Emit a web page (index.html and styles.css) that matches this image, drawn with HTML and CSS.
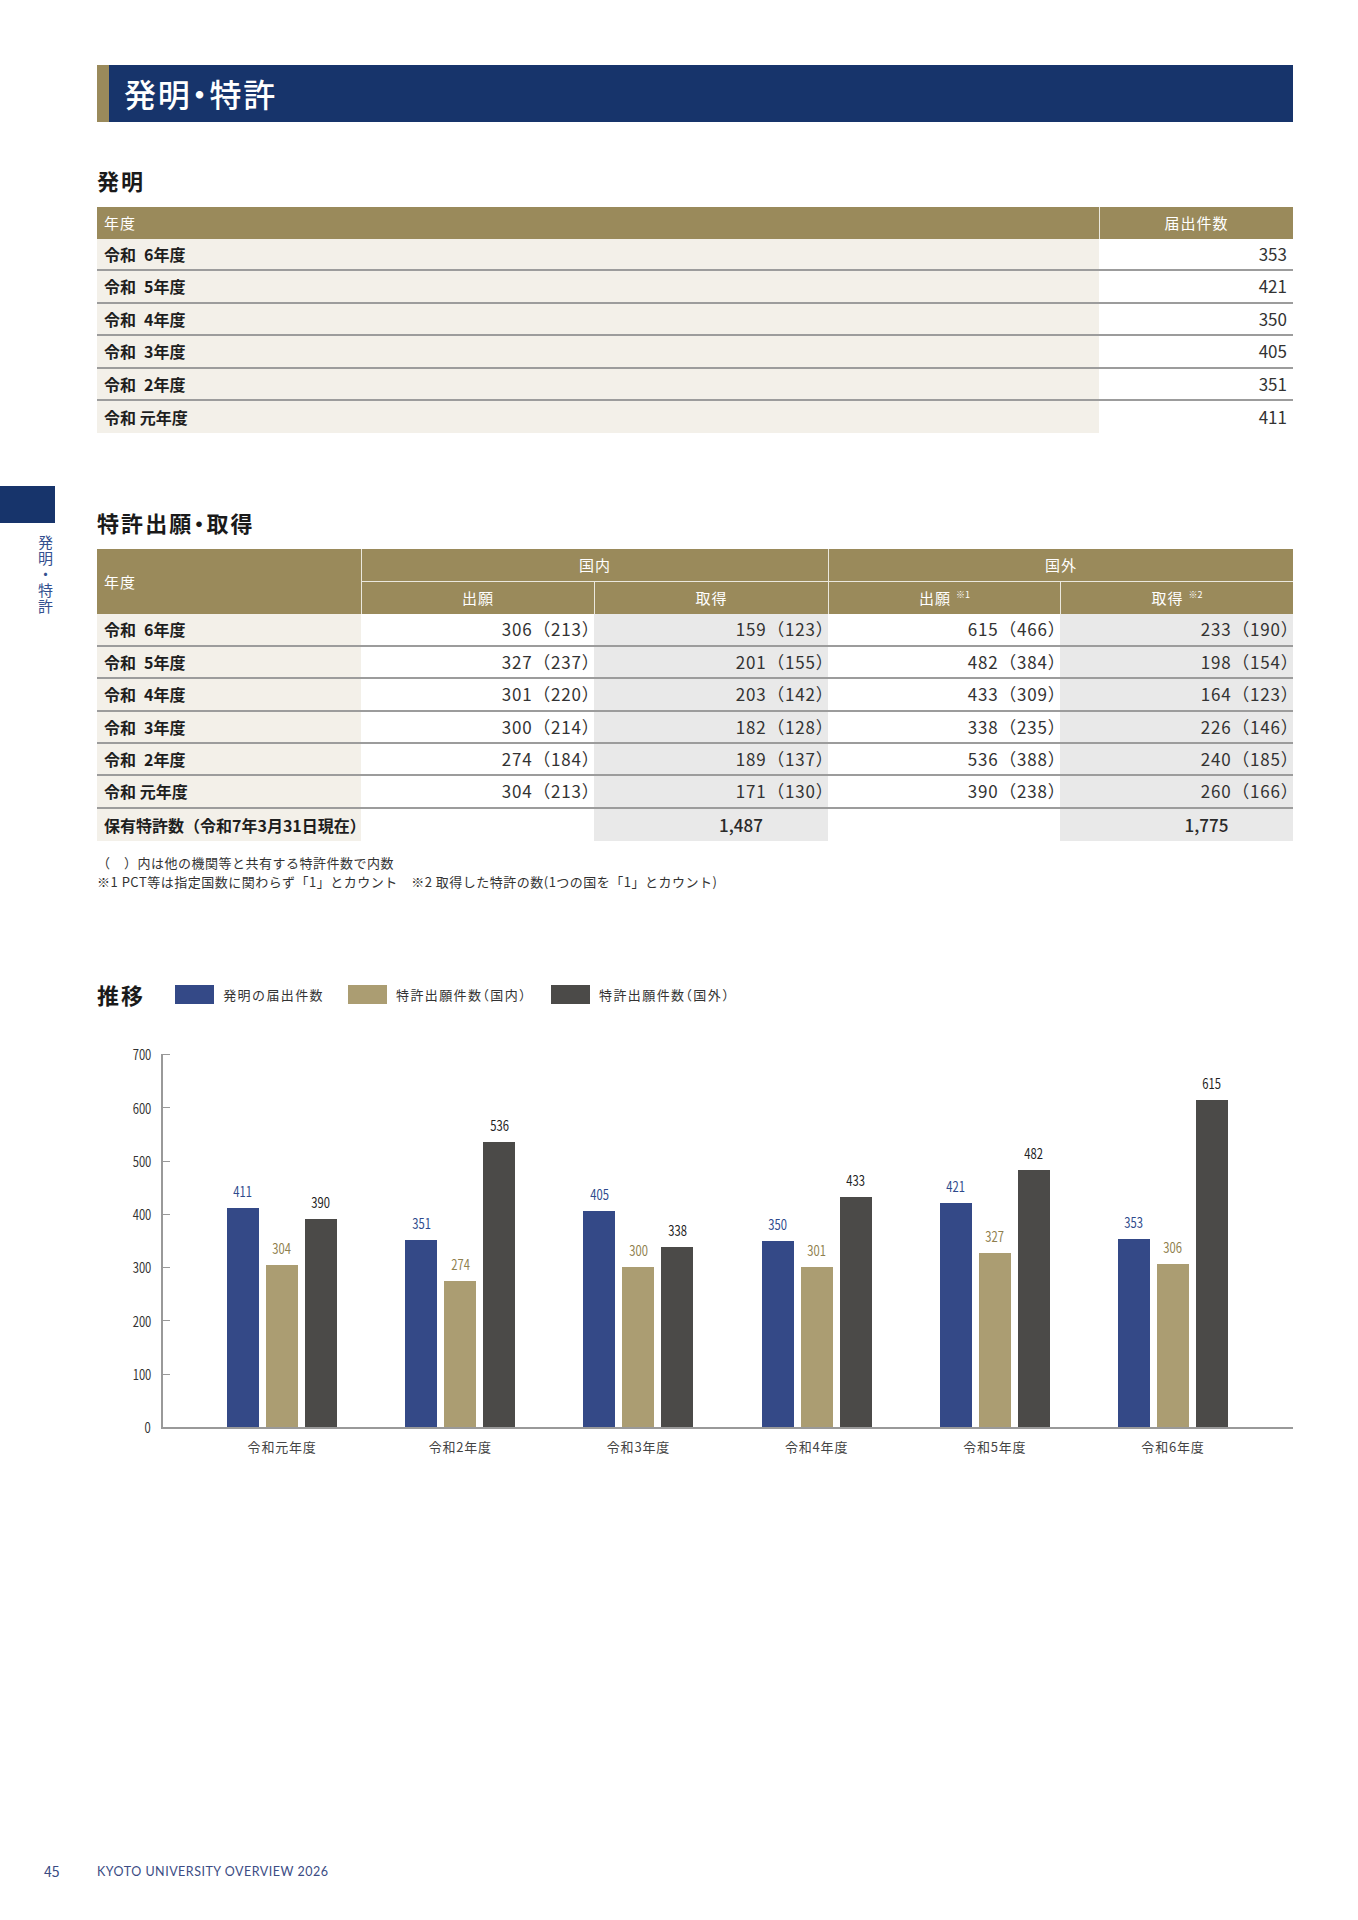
FILE: index.html
```html
<!DOCTYPE html>
<html lang="ja">
<head>
<meta charset="utf-8">
<title>発明・特許</title>
<link rel="stylesheet" href="styles.css">
</head>
<body>
<div class="page">
  <div class="body-row">
    <aside class="side">
      <div class="side-block"></div>
      <div class="side-text">発明・特許</div>
    </aside>
    <main class="main">
      <h1 class="title">発明・特許</h1>

      <h2 class="sub sub-first">発明</h2>
      <table class="tbl t1">
        <colgroup><col class="c1-year"><col class="c1-num"></colgroup>
        <thead>
          <tr><th class="th-left">年度</th><th class="th-sep">届出件数</th></tr>
        </thead>
        <tbody>
          <tr><td class="year">令和&ensp;6年度</td><td class="num">353</td></tr>
          <tr><td class="year">令和&ensp;5年度</td><td class="num">421</td></tr>
          <tr><td class="year">令和&ensp;4年度</td><td class="num">350</td></tr>
          <tr><td class="year">令和&ensp;3年度</td><td class="num">405</td></tr>
          <tr><td class="year">令和&ensp;2年度</td><td class="num">351</td></tr>
          <tr><td class="year">令和 元年度</td><td class="num">411</td></tr>
        </tbody>
      </table>

      <h2 class="sub sub-second">特許出願・取得</h2>
      <table class="tbl t2">
        <colgroup><col class="c2-year"><col class="c2-a"><col class="c2-b"><col class="c2-c"><col class="c2-d"></colgroup>
        <thead>
          <tr><th rowspan="2" class="th-left">年度</th><th colspan="2" class="th-sep">国内</th><th colspan="2" class="th-sep">国外</th></tr>
          <tr><th class="th-sep th-sub">出願</th><th class="th-sep th-sub">取得</th><th class="th-sep th-sub">出願<sup>※1</sup></th><th class="th-sep th-sub">取得<sup>※2</sup></th></tr>
        </thead>
        <tbody>
          <tr><td class="year">令和&ensp;6年度</td><td class="num">306&ensp;（213）</td><td class="num g">159&ensp;（123）</td><td class="num">615&ensp;（466）</td><td class="num g">233&ensp;（190）</td></tr>
          <tr><td class="year">令和&ensp;5年度</td><td class="num">327&ensp;（237）</td><td class="num g">201&ensp;（155）</td><td class="num">482&ensp;（384）</td><td class="num g">198&ensp;（154）</td></tr>
          <tr><td class="year">令和&ensp;4年度</td><td class="num">301&ensp;（220）</td><td class="num g">203&ensp;（142）</td><td class="num">433&ensp;（309）</td><td class="num g">164&ensp;（123）</td></tr>
          <tr><td class="year">令和&ensp;3年度</td><td class="num">300&ensp;（214）</td><td class="num g">182&ensp;（128）</td><td class="num">338&ensp;（235）</td><td class="num g">226&ensp;（146）</td></tr>
          <tr><td class="year">令和&ensp;2年度</td><td class="num">274&ensp;（184）</td><td class="num g">189&ensp;（137）</td><td class="num">536&ensp;（388）</td><td class="num g">240&ensp;（185）</td></tr>
          <tr><td class="year">令和 元年度</td><td class="num">304&ensp;（213）</td><td class="num g">171&ensp;（130）</td><td class="num">390&ensp;（238）</td><td class="num g">260&ensp;（166）</td></tr>
          <tr><td class="year">保有特許数（令和7年3月31日現在）</td><td></td><td class="ctr g">1,487</td><td></td><td class="ctr g">1,775</td></tr>
        </tbody>
      </table>
      <div class="notes">
        <p>（　）内は他の機関等と共有する特許件数で内数</p>
        <p>※1 PCT等は指定国数に関わらず「1」とカウント　※2 取得した特許の数(1つの国を「1」とカウント)</p>
      </div>

      <div class="legend">
        <h2 class="sub legend-title">推移</h2>
        <div class="key"><span class="swatch s-blue"></span>発明の届出件数</div>
        <div class="key"><span class="swatch s-gold"></span>特許出願件数（国内）</div>
        <div class="key"><span class="swatch s-dark"></span>特許出願件数（国外）</div>
      </div>

      <div class="chart">
        <div class="yaxis">
          <span><b>700</b></span><span><b>600</b></span><span><b>500</b></span><span><b>400</b></span><span><b>300</b></span><span><b>200</b></span><span><b>100</b></span><span><b>0</b></span>
        </div>
        <div class="plot">
          <div class="group">
            <div class="barcol"><span class="val v-blue">411</span><div class="bar b-blue" style="height:219.0px"></div></div>
            <div class="barcol"><span class="val v-gold">304</span><div class="bar b-gold" style="height:162.0px"></div></div>
            <div class="barcol"><span class="val v-dark">390</span><div class="bar b-dark" style="height:207.8px"></div></div>
          </div>
          <div class="group">
            <div class="barcol"><span class="val v-blue">351</span><div class="bar b-blue" style="height:187.0px"></div></div>
            <div class="barcol"><span class="val v-gold">274</span><div class="bar b-gold" style="height:146.0px"></div></div>
            <div class="barcol"><span class="val v-dark">536</span><div class="bar b-dark" style="height:285.6px"></div></div>
          </div>
          <div class="group">
            <div class="barcol"><span class="val v-blue">405</span><div class="bar b-blue" style="height:215.8px"></div></div>
            <div class="barcol"><span class="val v-gold">300</span><div class="bar b-gold" style="height:159.9px"></div></div>
            <div class="barcol"><span class="val v-dark">338</span><div class="bar b-dark" style="height:180.1px"></div></div>
          </div>
          <div class="group">
            <div class="barcol"><span class="val v-blue">350</span><div class="bar b-blue" style="height:186.5px"></div></div>
            <div class="barcol"><span class="val v-gold">301</span><div class="bar b-gold" style="height:160.4px"></div></div>
            <div class="barcol"><span class="val v-dark">433</span><div class="bar b-dark" style="height:230.7px"></div></div>
          </div>
          <div class="group">
            <div class="barcol"><span class="val v-blue">421</span><div class="bar b-blue" style="height:224.3px"></div></div>
            <div class="barcol"><span class="val v-gold">327</span><div class="bar b-gold" style="height:174.2px"></div></div>
            <div class="barcol"><span class="val v-dark">482</span><div class="bar b-dark" style="height:256.8px"></div></div>
          </div>
          <div class="group">
            <div class="barcol"><span class="val v-blue">353</span><div class="bar b-blue" style="height:188.1px"></div></div>
            <div class="barcol"><span class="val v-gold">306</span><div class="bar b-gold" style="height:163.1px"></div></div>
            <div class="barcol"><span class="val v-dark">615</span><div class="bar b-dark" style="height:327.7px"></div></div>
          </div>
        </div>
        <div class="xlabels">
          <span>令和元年度</span><span>令和2年度</span><span>令和3年度</span><span>令和4年度</span><span>令和5年度</span><span>令和6年度</span>
        </div>
      </div>
    </main>
  </div>
  <footer class="footer">
    <span class="pageno">45</span>
    <span class="pubname">KYOTO UNIVERSITY OVERVIEW 2026</span>
  </footer>
</div>
</body>
</html>
```

FILE: styles.css
```css
* { box-sizing: border-box; }
html, body { margin: 0; padding: 0; background: #fff; }
body {
  font-family: "Noto Sans CJK JP", "Noto Sans", sans-serif;
  color: #222;
  width: 1358px;
}
.page { min-height: 1920px; display: flex; flex-direction: column; }
.body-row { display: flex; }

/* side tab */
.side { width: 97px; flex: none; padding-top: 486px; }
.side-block { width: 55px; height: 37px; background: #17346b; }
.side-text {
  writing-mode: vertical-rl;
  font-size: 15px;
  line-height: 15px;
  letter-spacing: 1px;
  color: #33508f;
  margin: 12px 0 0 38px;
}

.main { width: 1196px; flex: none; padding-top: 65px; }

.title {
  margin: 0;
  height: 57px;
  line-height: 57px;
  background: #17346b;
  border-left: 12px solid #9a8a5b;
  padding-left: 15px;
  color: #fff;
  font-size: 32px;
  letter-spacing: 1.8px;
  font-weight: 500;
  font-feature-settings: "halt";
}

.sub {
  margin: 0;
  font-size: 22px;
  line-height: 30px;
  font-weight: 700;
  letter-spacing: 2.1px;
  color: #1a1a1a;
  font-feature-settings: "halt";
}
.sub-first { margin: 43px 0 12px; }
.sub-second { margin: 74px 0 12px; }

/* tables */
.tbl { width: 100%; border-collapse: separate; border-spacing: 0; table-layout: fixed; }
.c1-year { width: 1002px; }
.c1-num { width: 194px; }
.c2-year { width: 264px; }
.c2-a { width: 233px; }
.c2-b { width: 234px; }
.c2-c { width: 232px; }
.c2-d { width: 233px; }

.tbl th {
  background: #9a8a5b;
  color: #fff;
  font-weight: 400;
  font-size: 15px;
  letter-spacing: 1px;
  line-height: 32px;
  padding: 0;
  text-align: center;
}
.tbl th.th-left { text-align: left; padding-left: 7px; }
.tbl th.th-sep { border-left: 1px solid rgba(255,255,255,0.8); }
.tbl th.th-sub { border-top: 1px solid rgba(255,255,255,0.8); }
.tbl sup { font-size: 9px; line-height: 0; vertical-align: 6px; margin-left: 5px; letter-spacing: 0; }

.tbl td {
  padding: 0;
  line-height: 30.4px;
  border-bottom: 2px solid #9c9c9c;
  background: #fff;
  white-space: nowrap;
}
.tbl tbody tr:last-child td { border-bottom: 0; line-height: 32.4px; }
.tbl td.year {
  background: #f3f0e9;
  font-weight: 700;
  font-size: 16px;
  padding-left: 7px;
  color: #1e1e1e;
}
.tbl td.num { text-align: right; padding-right: 6px; font-size: 17px; color: #333; }
.t2 td.num { padding-right: 3px; letter-spacing: 0.8px; font-feature-settings: "halt"; }
.tbl td.ctr { text-align: center; padding-left: 60px; font-size: 17px; font-weight: 500; color: #2a2a2a; }
.tbl td.g { background: #e9e9e9; }

.notes { margin-top: 12px; font-size: 13px; line-height: 19px; letter-spacing: 0.5px; color: #333; }
.notes p { margin: 0; }

/* legend */
.legend { display: flex; align-items: center; margin-top: 88px; }
.legend-title { margin-right: 30px; }
.key {
  display: flex;
  align-items: center;
  margin-right: 24px;
  font-size: 13px;
  letter-spacing: 1.4px;
  color: #333;
  font-feature-settings: "halt";
}
.swatch { width: 39px; height: 19px; margin-right: 9px; }
.s-blue, .b-blue { background: #344987; }
.s-gold, .b-gold { background: #ab9d72; }
.s-dark, .b-dark { background: #4b4a48; }

/* chart */
.chart { margin-top: 45px; display: grid; grid-template-columns: 64px 1132px; }
.yaxis {
  height: 373px;
  display: flex;
  flex-direction: column;
  justify-content: space-between;
  padding-right: 10px;
}
.yaxis span {
  height: 0;
  display: flex;
  align-items: center;
  justify-content: flex-end;
}
.yaxis b {
  display: inline-block;
  font-weight: 400;
  font-size: 14px;
  line-height: 14px;
  color: #333;
  transform: scaleX(0.8);
  transform-origin: right center;
}
.plot {
  height: 375px;
  border-left: 2px solid #999;
  border-bottom: 2px solid #999;
  display: flex;
  padding: 0 31px 0 30px;
  background-image: repeating-linear-gradient(to bottom, #999 0, #999 1px, transparent 1px, transparent 53.2857px);
  background-size: 7px 373px;
  background-repeat: no-repeat;
  background-position: 0 0;
}
.group { flex: 1; display: flex; justify-content: center; align-items: flex-end; gap: 7px; }
.barcol { width: 32px; display: flex; flex-direction: column; align-items: center; }
.val {
  display: inline-block;
  font-size: 14px;
  line-height: 16px;
  margin-bottom: 9px;
  transform: scaleX(0.8);
}
.v-blue { color: #2e4a8c; }
.v-gold { color: #8f7f4e; }
.v-dark { color: #222; }
.bar { width: 32px; }

.xlabels { grid-column: 2; display: flex; padding: 0 31px 0 32px; margin-top: 9px; }
.xlabels span { flex: 1; text-align: center; font-size: 13px; line-height: 18px; letter-spacing: 0.8px; color: #444; }

/* footer */
.footer { margin-top: auto; margin-bottom: 39px; height: 20px; display: flex; align-items: center; }
.pageno { width: 97px; padding-left: 44px; font-size: 14px; color: #3b4c84; }
.pubname { font-family: Lato, "Noto Sans", sans-serif; font-size: 12.5px; letter-spacing: 0.5px; color: #3b4c84; }
```
